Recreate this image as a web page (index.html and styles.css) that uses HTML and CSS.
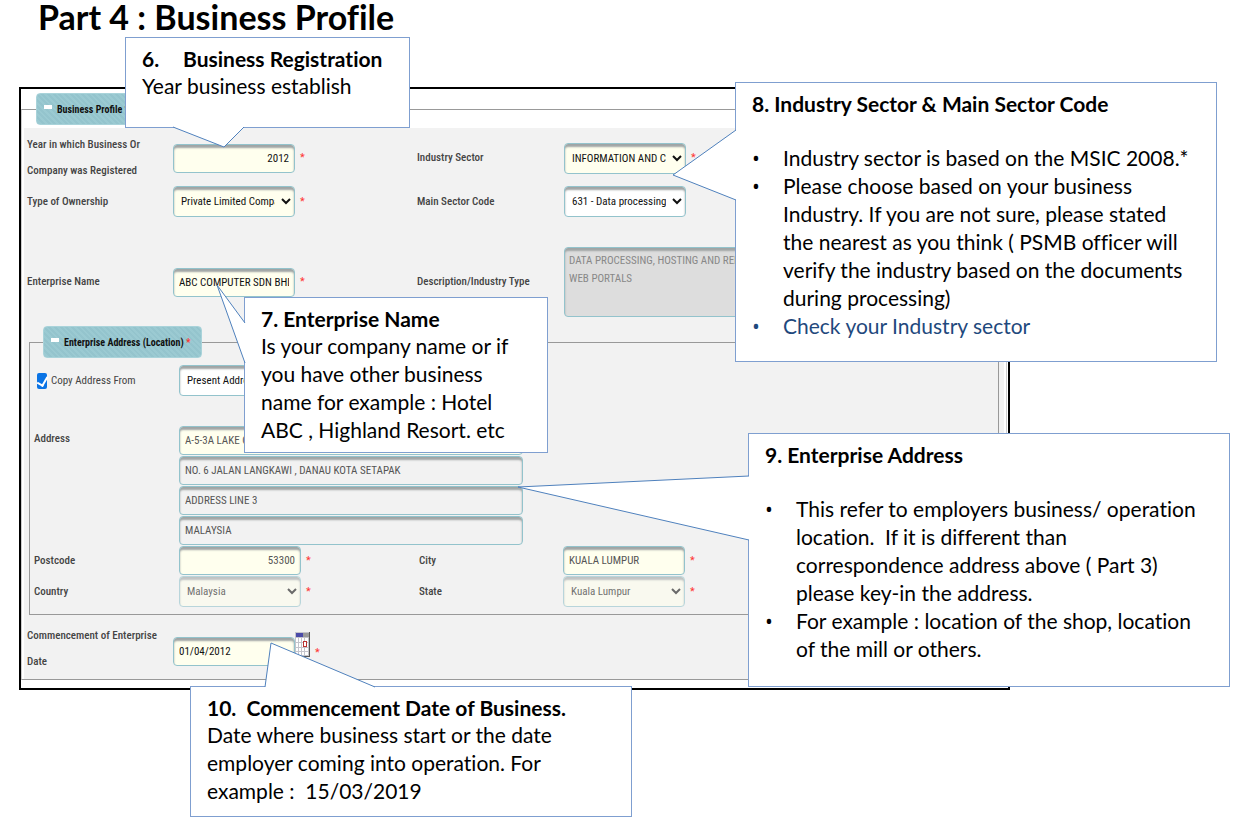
FILE: index.html
```
<!DOCTYPE html>
<html lang="en">
<head>
    <meta charset="utf-8"/>
    <title>Part 4 : Business Profile</title>
    <link rel="stylesheet" href="styles.css">
</head>
<body>
    <main class="slide">
        <h1>Part 4 : Business Profile</h1>
        <form class="panel">
            <fieldset class="profile">
                <legend><button type="button" class="toggle"><span class="minus"></span>Business Profile <span class="req">*</span></button></legend>
                <div class="content">
                    <div class="row">
                        <label for="year">Year in which Business Or Company was Registered</label>
                        <div class="field"><input id="year" class="number" type="text" value="2012"><span class="req">*</span></div>
                        <label for="sector">Industry Sector</label>
                        <div class="field"><select id="sector"><option>INFORMATION AND COMMUNICATION</option></select><span class="req">*</span></div>
                    </div>
                    <div class="row ownership">
                        <label for="ownership">Type of Ownership</label>
                        <div class="field"><select id="ownership"><option>Private Limited Company</option></select><span class="req">*</span></div>
                        <label for="code">Main Sector Code</label>
                        <div class="field"><select id="code" class="plain"><option>631 - Data processing, hosting</option></select></div>
                    </div>
                    <div class="row">
                        <label for="name">Enterprise Name</label>
                        <div class="field"><input id="name" type="text" value="ABC COMPUTER SDN BHD"><span class="req">*</span></div>
                        <label for="description">Description/Industry Type</label>
                        <div class="field"><textarea id="description" disabled>DATA PROCESSING, HOSTING AND RELATED ACTIVITIES;
WEB PORTALS</textarea></div>
                    </div>
                    <fieldset class="location">
                        <legend><button type="button" class="toggle"><span class="minus"></span>Enterprise Address (Location) <span class="req">*</span></button></legend>
                        <div class="row copy">
                            <label class="check"><input type="checkbox" checked>Copy Address From</label>
                            <div class="field"><select class="plain" aria-label="Copy address from"><option>Present Address</option></select></div>
                        </div>
                        <div class="row address">
                            <label for="address">Address</label>
                            <div class="lines">
                                <input id="address" type="text" value="A-5-3A LAKE CITY" readonly>
                                <input type="text" class="grey" value="NO. 6 JALAN LANGKAWI , DANAU KOTA SETAPAK" aria-label="Address line 2" readonly>
                                <input type="text" class="grey" value="ADDRESS LINE 3" aria-label="Address line 3" readonly>
                                <input type="text" class="grey" value="MALAYSIA" aria-label="Address line 4" readonly>
                            </div>
                        </div>
                        <div class="row">
                            <label for="postcode">Postcode</label>
                            <div class="field"><input id="postcode" class="number" type="text" value="53300" readonly><span class="req">*</span></div>
                            <label for="city">City</label>
                            <div class="field"><input id="city" type="text" value="KUALA LUMPUR" readonly><span class="req">*</span></div>
                        </div>
                        <div class="row">
                            <label for="country">Country</label>
                            <div class="field"><select id="country" disabled><option>Malaysia</option></select><span class="req">*</span></div>
                            <label for="state">State</label>
                            <div class="field"><select id="state" disabled><option>Kuala Lumpur</option></select><span class="req">*</span></div>
                        </div>
                    </fieldset>
                    <div class="row">
                        <label for="date">Commencement of Enterprise Date</label>
                        <div class="field date">
                            <input id="date" type="text" value="01/04/2012">
                            <button type="button" class="calendar" aria-label="Pick a date">
                                <svg width="15" height="25" viewBox="0 0 15 25">
                                    <rect width="15" height="25" fill="#555"/>
                                    <rect width="14" height="24" fill="#c4c4cc"/>
                                    <rect x="1" y="1" width="7" height="4" fill="#4a4aa8"/>
                                    <rect x="8" y="1" width="6" height="4" fill="#999"/>
                                    <path d="M1 6h2v4H1zM4 6h2v4H4zM7 6h2v4H7zM10 6h3v4h-3zM1 11h2v4H1zM4 11h2v4H4zM7 11h2v4H7zM10 11h3v4h-3zM1 16h2v3H1zM4 16h2v3H4zM7 16h2v3H7zM10 16h3v3h-3zM1 20h2v3H1zM4 20h2v3H4zM7 20h2v3H7zM10 20h3v3h-3z" fill="#fff"/>
                                    <rect x="8.5" y="9.5" width="3" height="5" fill="#fff" stroke="#b33"/>
                                </svg>
                            </button>
                            <span class="req">*</span>
                        </div>
                    </div>
                </div>
            </fieldset>
        </form>

        <section class="callout registration">
            <svg class="tail" width="72" height="22" viewBox="0 0 72 22"><path d="M0 1L51 21L71 1"/></svg>
            <h2><span class="step">6.</span>Business Registration</h2>
            <p>Year business establish</p>
        </section>
        <section class="callout enterprise">
            <svg class="tail" width="30" height="80" viewBox="0 0 30 80"><path d="M29 39L1 1L29 79"/></svg>
            <h2>7. Enterprise Name</h2>
            <p>Is your company name or if<br>you have other business<br>name for example : Hotel<br>ABC , Highland Resort. etc</p>
        </section>
        <section class="callout sector">
            <svg class="tail" width="65" height="72" viewBox="0 0 65 72"><path d="M64 1L1 46L64 71"/></svg>
            <h2>8. Industry Sector &amp; Main Sector Code</h2>
            <ul>
                <li><span>Industry sector is based on the MSIC 2008.*</span></li>
                <li><span>Please choose based on your business<br>Industry. If you are not sure, please stated<br>the nearest as you think ( PSMB officer will<br>verify the industry based on the documents<br>during processing)</span></li>
                <li class="link"><a href="#sector">Check your Industry sector</a></li>
            </ul>
        </section>
        <section class="callout place">
            <svg class="tail" width="233" height="66" viewBox="0 0 233 66"><path d="M232 1L1 12L232 65"/></svg>
            <h2>9. Enterprise Address</h2>
            <ul>
                <li><span>This refer to employers business/ operation<br>location.&nbsp; If it is different than<br>correspondence address above ( Part 3)<br>please key-in the address.</span></li>
                <li><span>For example : location of the shop, location<br>of the mill or others.</span></li>
            </ul>
        </section>
        <section class="callout commencement">
            <svg class="tail" width="112" height="46" viewBox="0 0 112 46"><path d="M1 45L7 1L111 45"/></svg>
            <h2>10.&nbsp; Commencement Date of Business.</h2>
            <p>Date where business start or the date<br>employer coming into operation. For<br>example :&nbsp; 15/03/2019</p>
        </section>
    </main>
</body>
</html>
```
FILE: styles.css
```
* {
    box-sizing: border-box;
}
body {
    margin: 0;
    background: #fff;
    color: #000;
    font-family: Lato, "Open Sans", sans-serif;
    font-size: 21px;
    font-variant-ligatures: none;
    line-height: 28px;
}
h1, h2, p, ul {
    margin: 0;
    padding: 0;
}
h1 {
    padding-left: 38px;
    font-size: 34px;
    line-height: 34px;
}
.slide {
    position: relative;
    padding-bottom: 130px;
}

/* form */
.panel {
    margin: 53px 226px 0 19px;
    padding: 4px 1px 8px 0;
    border: 2px solid #000;
    font: 11px/26px "Roboto Condensed", "Liberation Sans", Arial, sans-serif;
}
fieldset {
    min-width: 0;
    margin: 0;
    padding: 0;
    border: 1px solid #999;
}
.profile {
    border-left-color: #ccc;
    border-right-color: #ccc;
}
legend {
    margin-left: 14px;
    padding: 0;
}
.toggle {
    display: flex;
    align-items: center;
    height: 32px;
    padding: 0 10px 0 7px;
    border: 1px solid #a9d3da;
    border-radius: 4px;
    background: repeating-linear-gradient(45deg, #94c4cd 0 2px, #9bcad2 2px 4px);
    color: #111;
    font: bold 10px "Roboto Condensed", "Liberation Sans", Arial, sans-serif;
    white-space: pre;
}
.minus {
    width: 8px;
    height: 4px;
    margin: 0 5px 5px 0;
    background: #fff;
}
.req {
    color: #f33;
}
.content {
    margin: 3px 2px 0;
    padding: 4px 3px;
    background: #f2f2f2;
}
.row {
    display: grid;
    grid-template-columns: 146px 244px 147px 1fr;
    align-items: center;
}
.row label {
    padding-right: 10px;
    color: #444;
    font-weight: 500;
}
.row.ownership {
    margin: 2px 0 30px;
}
.field {
    display: flex;
    align-items: center;
    gap: 5px;
}
input, select, textarea {
    width: 122px;
    height: 29px;
    margin: 0;
    padding: 0 5px;
    border: 1px solid #93c3cc;
    border-radius: 4px;
    background: #ffffee;
    box-shadow: inset 0 3px 2px #a0a5a5;
    color: #111;
    font: 11px "Roboto Condensed", "Liberation Sans", Arial, sans-serif;
}
select {
    height: 31px;
    padding: 0 3px;
}
select:disabled {
    opacity: 0.6;
}
input[readonly] {
    color: #555;
}
.plain {
    background: #fff;
}
.grey {
    background: #f2f2f2;
}
.number {
    text-align: right;
}
textarea {
    display: block;
    width: 330px;
    height: 70px;
    padding: 4px;
    background: #ddd;
    color: #888;
    line-height: 18px;
    resize: none;
}

.location {
    margin: 9px 2px 8px;
    padding: 0 4px 6px;
}
.location legend {
    margin-left: 9px;
}
.location .row {
    grid-template-columns: 145px 240px 144px 1fr;
    margin-bottom: 1px;
}
.location .copy {
    margin: 7px 0 30px;
}
.location .check {
    display: flex;
    align-items: center;
    gap: 4px;
    padding-left: 3px;
    font-weight: normal;
}
.check input {
    display: grid;
    place-items: center;
    width: 10px;
    height: 16px;
    padding: 0;
    border: 0;
    border-radius: 2px;
    background: #fff;
    box-shadow: inset 0 0 0 1px #777;
    appearance: none;
}
.check input:checked {
    background: #0b74e5;
    box-shadow: none;
}
.check input:checked::before {
    content: "";
    width: 5px;
    height: 9px;
    border: solid #fff;
    border-width: 0 2px 2px 0;
    transform: rotate(30deg);
}
.row.address {
    grid-template-columns: 145px 344px;
    align-items: start;
}
.lines {
    display: grid;
    gap: 1px;
}
.lines input {
    width: 100%;
}
.date {
    align-items: flex-end;
    gap: 0;
}
.calendar {
    margin: 0 5px 9px 0;
    padding: 0;
    border: 0;
    background: none;
}
.calendar svg {
    display: block;
}

/* callouts lie over the form and point at its fields */
.callout {
    position: absolute;
    padding: 7px 16px;
    border: 1px solid #7f9fd0;
    background: #fff;
}
.callout h2 {
    font-size: 21px;
    line-height: 27px;
}
.callout li {
    display: grid;
    grid-template-columns: 31px 1fr;
    white-space: nowrap;
}
.callout ul {
    margin-top: 27px;
}
.callout li::before {
    content: "•";
    font-family: "Open Sans", sans-serif;
}
.link, .link a {
    color: #1f497d;
    text-decoration: none;
}
.step {
    display: inline-block;
    width: 41px;
}
.tail {
    position: absolute;
    fill: #fff;
    stroke: #4f81bd;
}
.registration {
    top: 37px;
    left: 125px;
    width: 285px;
    height: 91px;
}
.registration .tail {
    top: 88px;
    left: 47px;
}
.enterprise {
    top: 297px;
    left: 244px;
    width: 304px;
    height: 156px;
}
.enterprise .tail {
    top: -14px;
    left: -29px;
}
.sector {
    top: 82px;
    left: 735px;
    width: 482px;
    height: 280px;
}
.sector .tail {
    top: 46px;
    left: -64px;
}
.place {
    top: 433px;
    left: 748px;
    width: 482px;
    height: 254px;
}
.place .tail {
    top: 41px;
    left: -232px;
}
.commencement {
    top: 686px;
    left: 190px;
    width: 442px;
    height: 131px;
}
.commencement .tail {
    top: -45px;
    left: 73px;
}
```
